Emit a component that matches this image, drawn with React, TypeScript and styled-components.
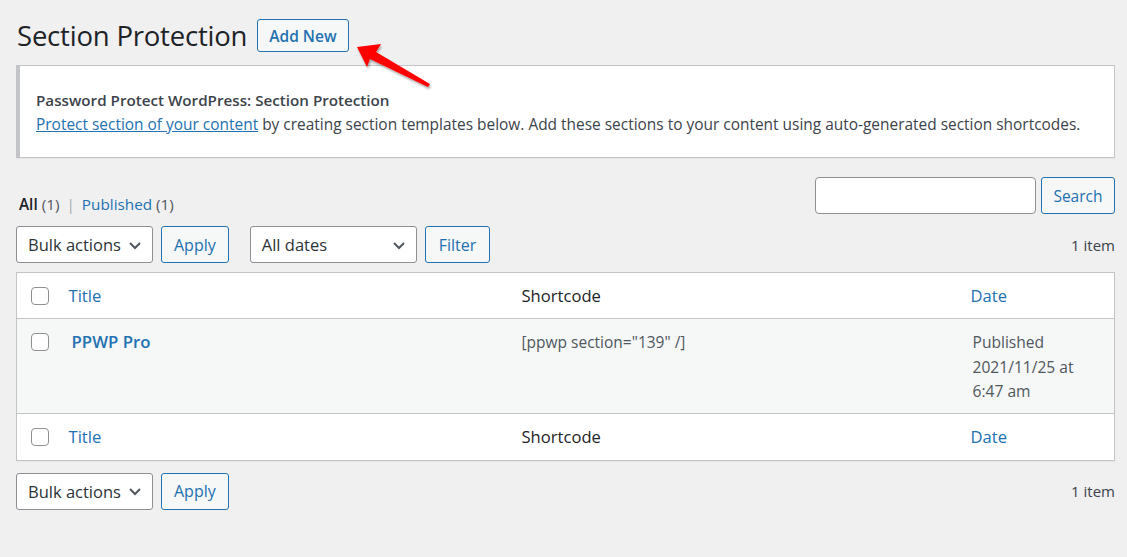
import React from "react";
import styled, { createGlobalStyle } from "styled-components";

const GlobalStyle = createGlobalStyle`
  html, body { margin: 0; padding: 0; }
  body {
    background: #f0f0f1;
    font-family: "Open Sans", "Noto Sans", Arial, sans-serif;
    color: #1d2327;
    font-size: 15px;
  }
  * { box-sizing: border-box; }
`;

const Page = styled.div`
  position: relative;
  padding: 19px 12px 40px 16px;
`;

const Header = styled.div`
  display: flex;
  align-items: center;
  gap: 10px;
`;

const Title = styled.h1`
  margin: 0 0 0 1px;
  font-size: 27.5px;
  font-weight: 400;
  line-height: 33px;
  color: #1d2327;
  letter-spacing: -0.2px;
`;

const Button = styled.button<{ $bold?: boolean; $h?: number; $size?: number; $px?: number }>`
  height: ${(p) => p.$h ?? 37}px;
  padding: 0 ${(p) => p.$px ?? (p.$bold ? 11 : 12)}px;
  background: #f6f7f7;
  border: 1px solid #2271b1;
  border-radius: 3px;
  color: #2271b1;
  font-family: inherit;
  font-size: ${(p) => p.$size ?? (p.$bold ? 15.5 : 16)}px;
  font-weight: ${(p) => (p.$bold ? 600 : 400)};
  cursor: pointer;
`;

const ArrowSvg = styled.svg`
  position: absolute;
  left: 350px;
  top: 38px;
  overflow: visible;
`;

const Notice = styled.div`
  margin-top: 13px;
  background: #fff;
  border: 1px solid #c3c4c7;
  border-left: 4px solid #c3c4c7;
  padding: 22px 16px 21px 16px;
  box-shadow: 0 1px 1px rgba(0, 0, 0, 0.04);
`;

const NoticeTitle = styled.div`
  font-weight: 600;
  font-size: 15.2px;
  line-height: 24px;
  color: #3c434a;
`;

const NoticeText = styled.div`
  font-size: 15.45px;
  line-height: 24px;
  color: #3c434a;
`;

const Link = styled.a<{ $underline?: boolean }>`
  color: #2271b1;
  text-decoration: ${(p) => (p.$underline ? "underline" : "none")};
`;

const TopRow = styled.div`
  margin-top: 19px;
  display: flex;
  justify-content: space-between;
  align-items: flex-end;
`;

const SubSub = styled.div`
  padding-left: 3px;
  font-size: 15.3px;
  line-height: 20px;
  color: #50575e;
  display: flex;
  gap: 7px;
`;

const Current = styled.span`
  color: #1d2327;
  font-weight: 600;
`;

const Sep = styled.span`
  color: #a7aaad;
`;

const Count = styled.span`
  color: #50575e;
`;

const SearchBox = styled.div`
  display: flex;
  gap: 5px;
`;

const SearchInput = styled.input`
  width: 221px;
  height: 37px;
  border: 1px solid #8c8f94;
  border-radius: 4px;
  background: #fff;
`;

const NavRow = styled.div`
  margin-top: 12px;
  display: flex;
  align-items: center;
  justify-content: space-between;
`;

const NavGroup = styled.div`
  display: flex;
  align-items: center;
  gap: 8px;
`;

const Spacer = styled.div`
  width: 5px;
`;

const Select = styled.div<{ $w: number }>`
  width: ${(p) => p.$w}px;
  height: 37px;
  border: 1px solid #8c8f94;
  border-radius: 3px;
  background: #fff;
  display: flex;
  align-items: center;
  justify-content: space-between;
  padding: 0 9px 0 11px;
  font-size: 16.5px;
  color: #2c3338;
`;

const ItemCount = styled.div`
  font-size: 15px;
  color: #3c434a;
`;

const Table = styled.table`
  margin-top: 9px;
  width: 100%;
  border-collapse: collapse;
  background: #fff;
  border: 1px solid #c3c4c7;
  box-shadow: 0 1px 1px rgba(0, 0, 0, 0.04);
`;

const Row = styled.tr<{ $striped?: boolean; $top?: boolean }>`
  background: ${(p) => (p.$striped ? "#f6f7f7" : "#fff")};
  border-top: ${(p) => (p.$top ? "1px solid #c3c4c7" : "none")};
`;

const Cell = styled.td<{ $w?: number; $body?: boolean; $foot?: boolean }>`
  width: ${(p) => (p.$w ? `${p.$w}px` : "auto")};
  padding: ${(p) => (p.$body ? "11px 10px 9px" : p.$foot ? "13px 10px 13px" : "13px 10px 12px")};
  vertical-align: top;
  text-align: left;
  font-size: 16.6px;
  line-height: 20px;
  font-weight: 400;
  color: #1d2327;
`;

const CheckCell = styled.td`
  width: 42px;
  padding: 14px 0 0 14px;
  vertical-align: top;
`;

const Checkbox = styled.span`
  display: block;
  width: 18px;
  height: 18px;
  border: 1px solid #8c8f94;
  border-radius: 4px;
  background: #fff;
`;

const RowTitle = styled.a`
  display: block;
  padding-left: 3px;
  color: #2271b1;
  font-weight: 600;
  font-size: 16.8px;
  line-height: 24px;
  text-decoration: none;
`;

const Shortcode = styled.div`
  font-size: 15.5px;
  line-height: 24px;
  color: #50575e;
`;

const DateText = styled.div`
  padding-left: 2px;
  font-size: 15.6px;
  line-height: 24.5px;
  color: #50575e;
`;

const Chevron = () => (
  <svg width="16" height="16" viewBox="0 0 16 16">
    <path d="M3 6l5 5 5-5" fill="none" stroke="#50575e" strokeWidth="2" />
  </svg>
);

const HeadRow = ({ foot }: { foot?: boolean }) => (
  <Row $top={foot}>
    <CheckCell>
      <Checkbox />
    </CheckCell>
    <Cell $w={453} $foot={foot}>
      <Link>Title</Link>
    </Cell>
    <Cell $w={449} $foot={foot}>
      Shortcode
    </Cell>
    <Cell $foot={foot}>
      <Link>Date</Link>
    </Cell>
  </Row>
);

export default function App() {
  return (
    <>
      <GlobalStyle />
      <Page>
        <Header>
          <Title>Section Protection</Title>
          <Button $bold $h={33}>Add New</Button>
        </Header>
        <ArrowSvg width="90" height="60" viewBox="350 38 90 60">
          <defs>
            <filter id="sh" x="-20%" y="-20%" width="150%" height="150%">
              <feDropShadow dx="1" dy="2" stdDeviation="1.2" floodColor="#000" floodOpacity="0.35" />
            </filter>
          </defs>
          <polygon
            points="357,47 381,44 376,52 430,84 428,87 370,59 367,67"
            fill="#ff0000"
            filter="url(#sh)"
          />
        </ArrowSvg>
        <Notice>
          <NoticeTitle>Password Protect WordPress: Section Protection</NoticeTitle>
          <NoticeText>
            <Link $underline>Protect section of your content</Link> by creating section
            templates below. Add these sections to your content using auto-generated section
            shortcodes.
          </NoticeText>
        </Notice>
        <TopRow>
          <SubSub>
            <span>
              <Current>All</Current> <Count>(1)</Count>
            </span>
            <Sep>|</Sep>
            <span>
              <Link>Published</Link> <Count>(1)</Count>
            </span>
          </SubSub>
          <SearchBox>
            <SearchInput />
            <Button $size={15.5} $px={11.5}>Search</Button>
          </SearchBox>
        </TopRow>
        <NavRow>
          <NavGroup>
            <Select $w={137}>
              Bulk actions <Chevron />
            </Select>
            <Button>Apply</Button>
            <Spacer />
            <Select $w={167}>
              All dates <Chevron />
            </Select>
            <Button $px={13}>Filter</Button>
          </NavGroup>
          <ItemCount>1 item</ItemCount>
        </NavRow>
        <Table>
          <thead>
            <HeadRow />
          </thead>
          <tbody>
            <Row $striped $top>
              <CheckCell>
                <Checkbox />
              </CheckCell>
              <Cell $body>
                <RowTitle>PPWP Pro</RowTitle>
              </Cell>
              <Cell $body>
                <Shortcode>[ppwp section="139" /]</Shortcode>
              </Cell>
              <Cell $body>
                <DateText>
                  Published
                  <br />
                  2021/11/25 at
                  <br />
                  6:47 am
                </DateText>
              </Cell>
            </Row>
          </tbody>
          <tfoot>
            <HeadRow foot />
          </tfoot>
        </Table>
        <NavRow>
          <NavGroup>
            <Select $w={137}>
              Bulk actions <Chevron />
            </Select>
            <Button>Apply</Button>
          </NavGroup>
          <ItemCount>1 item</ItemCount>
        </NavRow>
      </Page>
    </>
  );
}
